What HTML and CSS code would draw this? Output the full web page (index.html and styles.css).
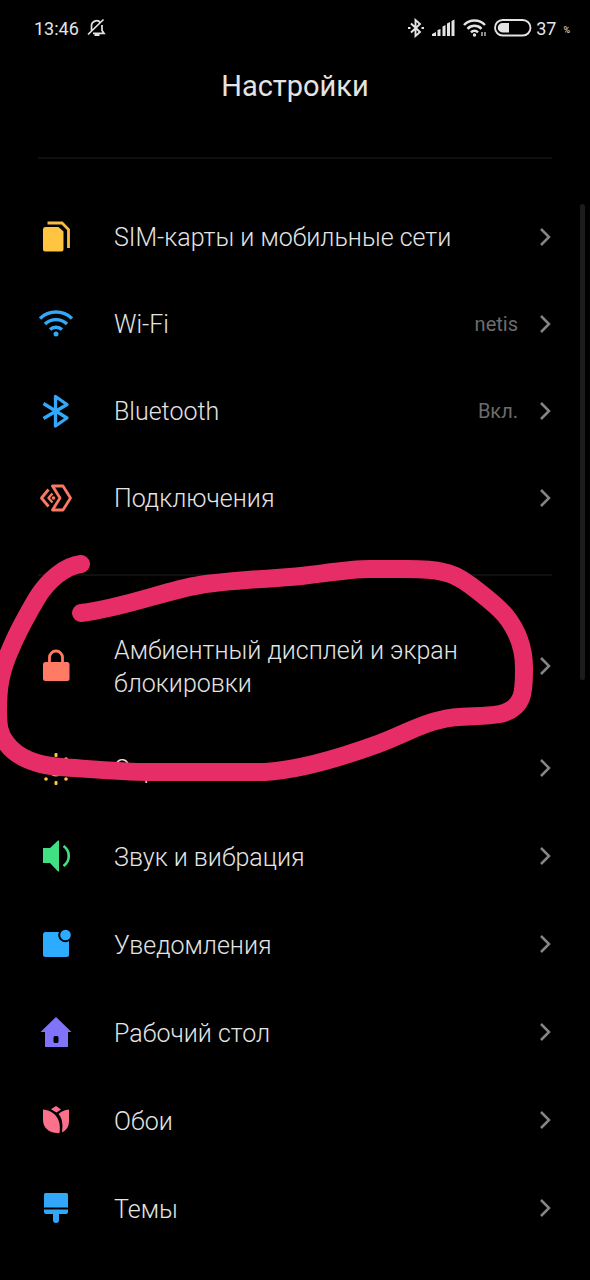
FILE: index.html
```html
<!DOCTYPE html>
<html lang="ru">
<head>
<meta charset="utf-8">
<meta name="viewport" content="width=device-width, initial-scale=1">
<title>Настройки</title>
<link rel="stylesheet" href="styles.css">
</head>
<body>
<div class="screen">
  <header class="status">
    <div class="status-side">
      <span class="clock">13:46</span>
      <svg class="bell" width="20" height="20" viewBox="0 0 20 20" fill="none" stroke="#e4e4e4" stroke-width="1.700"><path d="M4.500 12.500V8a5 5 0 0 1 9-3.200M15 7v5.500l2 2.800H6M1 16.500 16.500 1.500"/><path d="M7.500 17h5" stroke-width="2"/></svg>
    </div>
    <div class="status-side">
      <svg width="18" height="20" viewBox="0 0 18 20" fill="none" stroke="#e4e4e4" stroke-width="1.900"><path d="M4 5.500 13 14l-4.500 4V2L13 6l-9 8.500"/><path d="M1 10h2.500M14.500 10H17" stroke-width="2.200"/></svg>
      <svg class="signal" width="24" height="18" viewBox="0 0 24 18" fill="#e4e4e4"><path d="M0 17v-2l4-2v4zM5.500 17v-6l3-1v7zM10.500 17V7.500l3-1.500v11zM15 17V4.500L18 3v14zM19.500 17V2l3-1.500V17z"/></svg>
      <svg class="wifi-small" width="24" height="20" viewBox="0 0 24 20" fill="none" stroke="#e4e4e4" stroke-width="2.500"><path d="M1 7a14.500 14.500 0 0 1 21 0M4.500 10.800a9.800 9.800 0 0 1 14 0M8 14.300a5 5 0 0 1 7 0"/><circle cx="11.500" cy="17" r="1.700" fill="#e4e4e4" stroke="none"/><path d="M19 14v4M22 14v4" stroke-width="1.200"/></svg>
      <svg class="battery" width="38" height="18" viewBox="0 0 38 18"><rect x="1" y="1" width="35.500" height="15.500" rx="7.700" fill="none" stroke="#e4e4e4" stroke-width="1.800"/><path d="M15 4v9.500H8.500a4.700 4.700 0 0 1 0-9.500z" fill="#e4e4e4"/></svg>
      <span class="charge">37</span><span class="percent">%</span>
    </div>
  </header>

  <h1 class="title">Настройки</h1>

  <main class="list">
    <nav class="group group-network" aria-label="Сеть">
      <a class="row" href="#sim">
        <svg class="icon" viewBox="0 0 36 36"><path d="M5 10.500a2.500 2.500 0 0 1 2.500-2.500h13l5 4.500v18a2 2 0 0 1-2 2H7a2 2 0 0 1-2-2z" fill="#ffc440"/><path d="M9.500 4H24l6.500 6.500V29" fill="none" stroke="#f5bd48" stroke-width="2.800"/></svg>
        <span class="label">SIM-карты и мобильные сети</span>
        <svg class="chevron" viewBox="0 0 12 20"><path d="m2 2 8 8-8 8"/></svg>
      </a>
      <a class="row" href="#wifi">
        <svg class="icon" viewBox="0 0 36 36" fill="none" stroke="#34a8f8" stroke-width="3.400"><path d="M2 12.500a23 23 0 0 1 32 0M7 18a16 16 0 0 1 22 0M12 23.500a9 9 0 0 1 12 0"/><circle cx="18" cy="28" r="2.500" fill="#34a8f8" stroke="none"/></svg>
        <span class="label">Wi-Fi</span><span class="value">netis</span>
        <svg class="chevron" viewBox="0 0 12 20"><path d="m2 2 8 8-8 8"/></svg>
      </a>
      <a class="row" href="#bluetooth">
        <svg class="icon" viewBox="0 0 36 36" fill="none" stroke="#34a8f8" stroke-width="3.300" stroke-linejoin="round"><path d="m5.500 10.500 23.500 14.500-11.500 8V3.500L29 11.500 5.500 25.500"/></svg>
        <span class="label">Bluetooth</span><span class="value">Вкл.</span>
        <svg class="chevron" viewBox="0 0 12 20"><path d="m2 2 8 8-8 8"/></svg>
      </a>
      <a class="row" href="#connections">
        <svg class="icon" viewBox="0 0 36 36" fill="none" stroke="#fb7963" stroke-width="2.800" stroke-linejoin="round"><path d="M14.500 6H25l7.500 12L25 30H14.500L22 18z"/><path d="m10.500 9.500-7 8.500 7 8.500"/><path d="M14.500 13.500 10.500 18l4 4.500" stroke-width="2.400"/><circle cx="15.500" cy="18" r="1.800" fill="#fb7963" stroke="none"/></svg>
        <span class="label">Подключения</span>
        <svg class="chevron" viewBox="0 0 12 20"><path d="m2 2 8 8-8 8"/></svg>
      </a>
    </nav>

    <nav class="group group-device" aria-label="Устройство">
      <a class="row" href="#ambient">
        <svg class="icon" viewBox="0 0 36 36"><rect x="5" y="14" width="26.500" height="19" rx="2.500" fill="#ff7b65"/><path d="M11.500 15V9.500a6.500 6.500 0 0 1 13 0V15" fill="none" stroke="#ff7b65" stroke-width="2.800"/></svg>
        <span class="label">Амбиентный дисплей и экран блокировки</span>
        <svg class="chevron" viewBox="0 0 12 20"><path d="m2 2 8 8-8 8"/></svg>
      </a>
      <a class="row" href="#display">
        <svg class="icon" viewBox="0 0 36 36" fill="#ffc440"><circle cx="18" cy="18.500" r="8"/><rect x="16.500" y="3" width="3" height="4" rx="1"/><rect x="16.500" y="31" width="3" height="4" rx="1"/><circle cx="4" cy="19" r="1.800"/><circle cx="32" cy="19" r="1.800"/><circle cx="8" cy="9" r="1.800"/><circle cx="28" cy="9" r="1.800"/><circle cx="8" cy="29" r="1.800"/><circle cx="28" cy="29" r="1.800"/></svg>
        <span class="label">Экран</span>
        <svg class="chevron" viewBox="0 0 12 20"><path d="m2 2 8 8-8 8"/></svg>
      </a>
      <a class="row" href="#sound">
        <svg class="icon" viewBox="0 0 36 36"><path d="M5 10h7l8-7.500h1v31h-1L12 25H5z" fill="#41e083"/><path d="M25.500 8c7 5 7 15 0 20" fill="none" stroke="#41e083" stroke-width="2.600"/></svg>
        <span class="label">Звук и вибрация</span>
        <svg class="chevron" viewBox="0 0 12 20"><path d="m2 2 8 8-8 8"/></svg>
      </a>
      <a class="row" href="#notifications">
        <svg class="icon" viewBox="0 0 36 36" fill="#2dabff"><path d="M7.500 6H21a7 7 0 0 0 10 9v13.500a2.500 2.500 0 0 1-2.500 2.500h-21A2.500 2.500 0 0 1 5 28.500v-20A2.500 2.500 0 0 1 7.500 6z"/><circle cx="27.500" cy="9" r="5.300"/></svg>
        <span class="label">Уведомления</span>
        <svg class="chevron" viewBox="0 0 12 20"><path d="m2 2 8 8-8 8"/></svg>
      </a>
      <a class="row" href="#home">
        <svg class="icon" viewBox="0 0 36 36" fill="#8074fa"><path fill-rule="evenodd" d="M18 3 33.500 18H30v15H7V18H2.500zM17 22a1.500 1.500 0 0 0-1.500 1.500v4A1.500 1.500 0 0 0 17 29h2a1.500 1.500 0 0 0 1.500-1.500v-4A1.500 1.500 0 0 0 19 22z"/></svg>
        <span class="label">Рабочий стол</span>
        <svg class="chevron" viewBox="0 0 12 20"><path d="m2 2 8 8-8 8"/></svg>
      </a>
      <a class="row" href="#wallpaper">
        <svg class="icon" viewBox="0 0 36 36" fill="#fb708b"><path d="m18 4 5 3.500-4.500 3-5.500-3.200z"/><path d="M5 7.500C13 8 24 14 21.500 31 12 32 5 26 5 18z"/><path d="M20.500 12q4-4 10.500-4.500V19c0 5-2 9-7 11.500 1-8 .5-14-3.500-18.500z"/></svg>
        <span class="label">Обои</span>
        <svg class="chevron" viewBox="0 0 12 20"><path d="m2 2 8 8-8 8"/></svg>
      </a>
      <a class="row" href="#themes">
        <svg class="icon" viewBox="0 0 36 36" fill="#32a7fa"><path d="M7.500 3h21A1.500 1.500 0 0 1 30 4.500V17.500H6v-13A1.500 1.500 0 0 1 7.500 3zM6 19.500h24v2.500a2 2 0 0 1-2 2h-7v6a3 3 0 0 1-6 0v-6H8a2 2 0 0 1-2-2z"/></svg>
        <span class="label">Темы</span>
        <svg class="chevron" viewBox="0 0 12 20"><path d="m2 2 8 8-8 8"/></svg>
      </a>
    </nav>
  </main>

  <div class="scroll-thumb"></div>
  <svg class="marker" viewBox="0 0 590 1280" aria-hidden="true"><path d="M81 564C65 566 48 580 37 598C27 615 18 631 11 648C1 670-2 686-2 710C-2 725-1 735 7 744C17 757 36 765 60 767C90 769 120 772 150 772H265C300 770 345 756 378 744C405 734 420 724 440 720C460 714 480 718 500 714C525 708 524 690 524 668C524 649 518 631 505 615C497 606 482 594 470 585C459 577 450 573 443 572C432 569 420 569 407 569H370C346 569 316 575 290 577C260 579 225 581 200 585C167 590 125 608 81 613"/></svg>
</div>
</body>
</html>
```
FILE: styles.css
```css
* {
  box-sizing: border-box;
}

body {
  margin: 0;
  background: #000;
  color: #e4e4e4;
  font-family: Roboto, "Noto Sans", sans-serif;
}

.screen {
  position: relative;
  min-height: 100vh;
  overflow: hidden;
}

.status {
  display: flex;
  justify-content: space-between;
  align-items: center;
  height: 56px;
  padding: 0 20px 0 34px;
}

.status-side {
  display: flex;
  align-items: center;
}

.clock,
.charge {
  font-size: 18px;
}

.bell {
  margin-left: 8px;
}

.signal,
.wifi-small,
.battery {
  margin-left: 7px;
}

.charge {
  margin-left: 4px;
}

.percent {
  margin-left: 7px;
  padding-top: 4px;
  font-size: 9px;
}

.title {
  margin: 0;
  font-size: 29px;
  font-weight: 400;
  line-height: 60px;
  text-align: center;
}

.list {
  padding: 41px 38px 0;
}

.group {
  border-top: 2px solid #101010;
}

.group-network {
  padding: 34px 0 33px;
}

.group-device {
  padding-top: 32px;
}

.row {
  display: flex;
  align-items: center;
  min-height: 88px;
  padding: 24px 0;
  color: inherit;
  text-decoration: none;
}

.group-network .row {
  min-height: 87px;
}

.icon {
  flex: none;
  width: 36px;
  height: 36px;
}

.label {
  flex: 1;
  margin: 2px 24px 0 40px;
  font-size: 25px;
  font-weight: 300;
  line-height: 33px;
}

.value {
  margin-right: 21px;
  color: #6c6c6c;
  font-size: 20px;
}

.chevron {
  flex: none;
  width: 12px;
  height: 20px;
  margin-right: 1px;
  fill: none;
  stroke: #858585;
  stroke-width: 2.5;
}

.scroll-thumb {
  position: absolute;
  top: 204px;
  right: 5px;
  width: 5px;
  height: 476px;
  border-radius: 3px;
  background: #1c1c1c;
}

.marker {
  position: absolute;
  top: 0;
  left: 0;
  width: 100%;
  pointer-events: none;
  fill: none;
  stroke: #e72d67;
  stroke-width: 18;
  stroke-linecap: round;
  stroke-linejoin: round;
}
```
